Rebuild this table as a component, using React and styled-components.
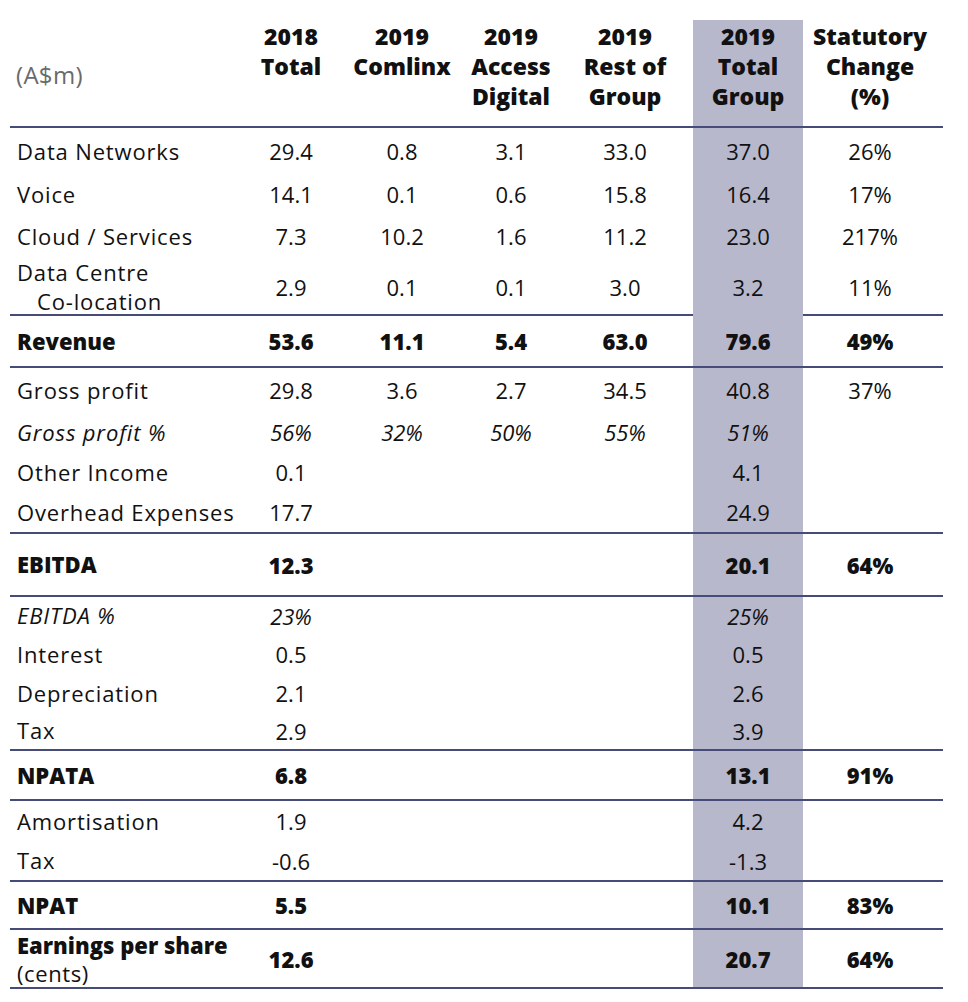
import React from "react";
import styled, { createGlobalStyle, css } from "styled-components";

const Global = createGlobalStyle`
  html, body { margin: 0; padding: 0; background: #ffffff; }
  body { font-family: "Open Sans", "Noto Sans", sans-serif; color: #111111; }
`;

const COLS = "227px 108px 114px 104px 130px 110px 140px";
const LINE = "#474b77";
const HILITE = "#b7b8cc";

const Page = styled.div`
  padding: 20px 0 0 10px;
`;

const Table = styled.div`
  width: 933px;
  display: flex;
  flex-direction: column;
`;

const gridBase = css`
  display: grid;
  grid-template-columns: ${COLS};
  & > *:nth-child(5),
  & > *:nth-child(7) {
    padding-right: 6px;
  }
`;

const HeaderRow = styled.div`
  ${gridBase};
  height: 106px;
  border-bottom: 2px solid ${LINE};
`;

const HeadLabel = styled.div`
  display: flex;
  align-items: center;
  padding: 2px 0 0 6px;
  font-size: 24px;
  font-weight: 400;
  color: #6a6a6a;
  letter-spacing: 0.3px;
`;

const HeadCell = styled.div`
  font-size: 23px;
  line-height: 30px;
  font-weight: 800;
  text-align: center;
  padding-top: 1px;
  background: ${(p) => (p.$hl ? HILITE : "transparent")};
`;

const Row = styled.div`
  ${gridBase};
  height: ${(p) => p.$h}px;
  border-bottom: ${(p) => (p.$border ? `2px solid ${LINE}` : "none")};
  font-size: 22px;
  font-weight: ${(p) => (p.$bold ? 800 : 500)};
  font-style: ${(p) => (p.$italic ? "italic" : "normal")};
`;

const Label = styled.div`
  display: flex;
  flex-direction: column;
  justify-content: center;
  padding: 0 0 0 7px;
  line-height: 29px;
  letter-spacing: ${(p) => (p.$bold ? "0" : "0.85px")};
  white-space: nowrap;
`;

const SubLine = styled.span`
  padding-left: ${(p) => p.$indent || 0}px;
  font-weight: ${(p) => p.$weight || "inherit"};
  line-height: ${(p) => p.$lh || 29}px;
  letter-spacing: ${(p) => (p.$weight ? "0.6px" : "inherit")};
`;

const Cell = styled.div`
  display: flex;
  align-items: center;
  justify-content: center;
  background: ${(p) => (p.$hl ? HILITE : "transparent")};
`;

const headers = [
  ["2018", "Total"],
  ["2019", "Comlinx"],
  ["2019", "Access", "Digital"],
  ["2019", "Rest of", "Group"],
  ["2019", "Total", "Group"],
  ["Statutory", "Change", "(%)"],
];

const rows = [
  { label: "Data Networks", v: ["29.4", "0.8", "3.1", "33.0", "37.0", "26%"], h: 46 },
  { label: "Voice", v: ["14.1", "0.1", "0.6", "15.8", "16.4", "17%"], h: 40 },
  { label: "Cloud / Services", v: ["7.3", "10.2", "1.6", "11.2", "23.0", "217%"], h: 44 },
  {
    lines: [{ t: "Data Centre" }, { t: "Co-location", indent: 20 }],
    v: ["2.9", "0.1", "0.1", "3.0", "3.2", "11%"],
    h: 56,
    border: true,
  },
  { label: "Revenue", v: ["53.6", "11.1", "5.4", "63.0", "79.6", "49%"], h: 50, bold: true, border: true },
  { label: "Gross profit", v: ["29.8", "3.6", "2.7", "34.5", "40.8", "37%"], h: 44 },
  { label: "Gross profit %", v: ["56%", "32%", "50%", "55%", "51%", ""], h: 40, italic: true },
  { label: "Other Income", v: ["0.1", "", "", "", "4.1", ""], h: 40 },
  { label: "Overhead Expenses", v: ["17.7", "", "", "", "24.9", ""], h: 40, border: true },
  { label: "EBITDA", v: ["12.3", "", "", "", "20.1", "64%"], h: 61, bold: true, border: true },
  { label: "EBITDA %", v: ["23%", "", "", "", "25%", ""], h: 37, italic: true },
  { label: "Interest", v: ["0.5", "", "", "", "0.5", ""], h: 40 },
  { label: "Depreciation", v: ["2.1", "", "", "", "2.6", ""], h: 38 },
  { label: "Tax", v: ["2.9", "", "", "", "3.9", ""], h: 37, border: true },
  { label: "NPATA", v: ["6.8", "", "", "", "13.1", "91%"], h: 48, bold: true, border: true },
  { label: "Amortisation", v: ["1.9", "", "", "", "4.2", ""], h: 40 },
  { label: "Tax", v: ["-0.6", "", "", "", "-1.3", ""], h: 39, border: true },
  { label: "NPAT", v: ["5.5", "", "", "", "10.1", "83%"], h: 46, bold: true, border: true },
  {
    lines: [{ t: "Earnings per share", lh: 28 }, { t: "(cents)", weight: 500, lh: 28 }],
    v: ["12.6", "", "", "", "20.7", "64%"],
    h: 57,
    bold: true,
    border: true,
  },
];

export default function App() {
  return (
    <>
      <Global />
      <Page>
        <Table>
          <HeaderRow>
            <HeadLabel>(A$m)</HeadLabel>
            {headers.map((h, i) => (
              <HeadCell key={i} $hl={i === 4}>
                {h.map((line, j) => (
                  <div key={j}>{line}</div>
                ))}
              </HeadCell>
            ))}
          </HeaderRow>
          {rows.map((r, i) => (
            <Row key={i} $h={r.h} $border={r.border} $bold={r.bold} $italic={r.italic}>
              <Label $bold={r.bold}>
                {r.lines
                  ? r.lines.map((l, j) => (
                      <SubLine key={j} $indent={l.indent} $weight={l.weight} $lh={l.lh}>
                        {l.t}
                      </SubLine>
                    ))
                  : r.label}
              </Label>
              {r.v.map((val, j) => (
                <Cell key={j} $hl={j === 4}>
                  {val}
                </Cell>
              ))}
            </Row>
          ))}
        </Table>
      </Page>
    </>
  );
}
